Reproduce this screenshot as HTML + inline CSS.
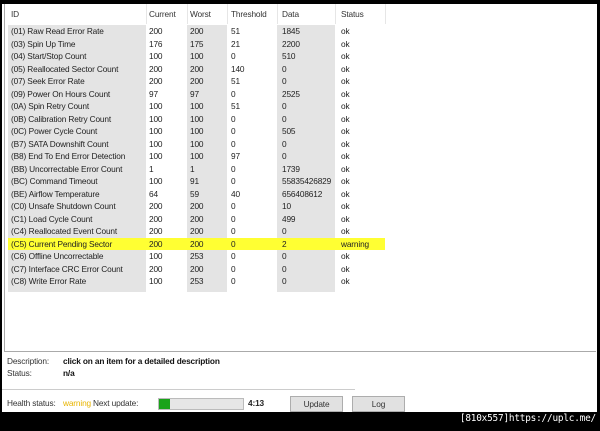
<!DOCTYPE html><html><head><style>
body{margin:0;width:600px;height:431px;background:#000;position:relative;overflow:hidden;font-family:"Liberation Sans",sans-serif;font-size:8.3px;letter-spacing:-0.15px;color:#222}
.win{position:absolute;left:2px;top:4px;width:595px;height:408px;background:#fff}
.lb{position:absolute;left:2px;top:0;width:591px;height:347px;border:1px solid #aaa;border-top:none;border-right:none;background:#fff}
.col{position:absolute;top:21px;height:267px;background:#e4e4e4}
.hd{position:absolute;top:0;height:20px;line-height:20px;color:#333}
.sep{position:absolute;top:0;width:1px;height:20px;background:#e6e6e6}
.row{position:absolute;left:0;width:380px;height:12.5px;line-height:12.5px}
.row span{position:absolute;white-space:nowrap}
.t{position:absolute;white-space:nowrap}
</style></head><body>
<div class="win">
<div class="lb">
<div class="col" style="left:3px;width:138px"></div>
<div class="col" style="left:182px;width:40px"></div>
<div class="col" style="left:272px;width:58px"></div>
<div class="hd" style="left:6px">ID</div>
<div class="hd" style="left:144px">Current</div>
<div class="hd" style="left:185px">Worst</div>
<div class="hd" style="left:226px">Threshold</div>
<div class="hd" style="left:277px">Data</div>
<div class="hd" style="left:336px">Status</div>
<div class="sep" style="left:141px"></div><div class="sep" style="left:182px"></div><div class="sep" style="left:222px"></div><div class="sep" style="left:272px"></div><div class="sep" style="left:330px"></div><div class="sep" style="left:380px"></div>
<div id="rows"></div>
</div>
<div class="t" style="left:5px;top:352px;color:#333">Description:</div>
<div class="t" style="left:61px;top:352px;font-weight:bold;color:#111">click on an item for a detailed description</div>
<div class="t" style="left:5px;top:364px;color:#333">Status:</div>
<div class="t" style="left:61px;top:364px;font-weight:bold;color:#111">n/a</div>
<div style="position:absolute;left:0;top:385px;width:353px;height:1px;background:#ccc"></div>
<div class="t" style="left:5px;top:394px;color:#333">Health status:</div>
<div class="t" style="left:61px;top:394px;color:#e8b400">warning</div>
<div class="t" style="left:91px;top:394px;color:#333">Next update:</div>
<div style="position:absolute;left:156px;top:394px;width:84px;height:10px;background:#e6e6e6;border:1px solid #bbb"></div>
<div style="position:absolute;left:157px;top:395px;width:11px;height:10px;background:#1aa31a"></div>
<div class="t" style="left:246px;top:394px;font-weight:bold">4:13</div>
<div style="position:absolute;left:288px;top:392px;width:51px;height:14px;background:#e1e1e1;border:1px solid #adadad;text-align:center;line-height:14px;color:#333">Update</div>
<div style="position:absolute;left:350px;top:392px;width:51px;height:14px;background:#e1e1e1;border:1px solid #adadad;text-align:center;line-height:14px;color:#333">Log</div>
</div>
<div class="t" style="right:4px;top:413px;color:#fff;font-family:'DejaVu Sans Mono',monospace;font-size:9.4px;letter-spacing:-0.2px">[810x557]https://uplc.me/</div>
<script>
var d=[["(01) Raw Read Error Rate",200,200,51,1845,"ok"],["(03) Spin Up Time",176,175,21,2200,"ok"],["(04) Start/Stop Count",100,100,0,510,"ok"],["(05) Reallocated Sector Count",200,200,140,0,"ok"],["(07) Seek Error Rate",200,200,51,0,"ok"],["(09) Power On Hours Count",97,97,0,2525,"ok"],["(0A) Spin Retry Count",100,100,51,0,"ok"],["(0B) Calibration Retry Count",100,100,0,0,"ok"],["(0C) Power Cycle Count",100,100,0,505,"ok"],["(B7) SATA Downshift Count",100,100,0,0,"ok"],["(B8) End To End Error Detection",100,100,97,0,"ok"],["(BB) Uncorrectable Error Count",1,1,0,1739,"ok"],["(BC) Command Timeout",100,91,0,"55835426829","ok"],["(BE) Airflow Temperature",64,59,40,"656408612","ok"],["(C0) Unsafe Shutdown Count",200,200,0,10,"ok"],["(C1) Load Cycle Count",200,200,0,499,"ok"],["(C4) Reallocated Event Count",200,200,0,0,"ok"],["(C5) Current Pending Sector",200,200,0,2,"warning"],["(C6) Offline Uncorrectable",100,253,0,0,"ok"],["(C7) Interface CRC Error Count",200,200,0,0,"ok"],["(C8) Write Error Rate",100,253,0,0,"ok"]];
var x=[6,144,185,226,277,336],h="";
d.forEach(function(r,i){h+='<div class="row" style="top:'+(21+i*12.5)+'px;'+(r[5]=="warning"?'background:#ffff33;left:3px;width:377px;':'left:0')+'">';
r.forEach(function(c,j){h+='<span style="left:'+(x[j]-(r[5]=="warning"?3:0))+'px">'+c+'</span>'});h+='</div>'});
document.getElementById('rows').innerHTML=h;
</script>
</body></html>
